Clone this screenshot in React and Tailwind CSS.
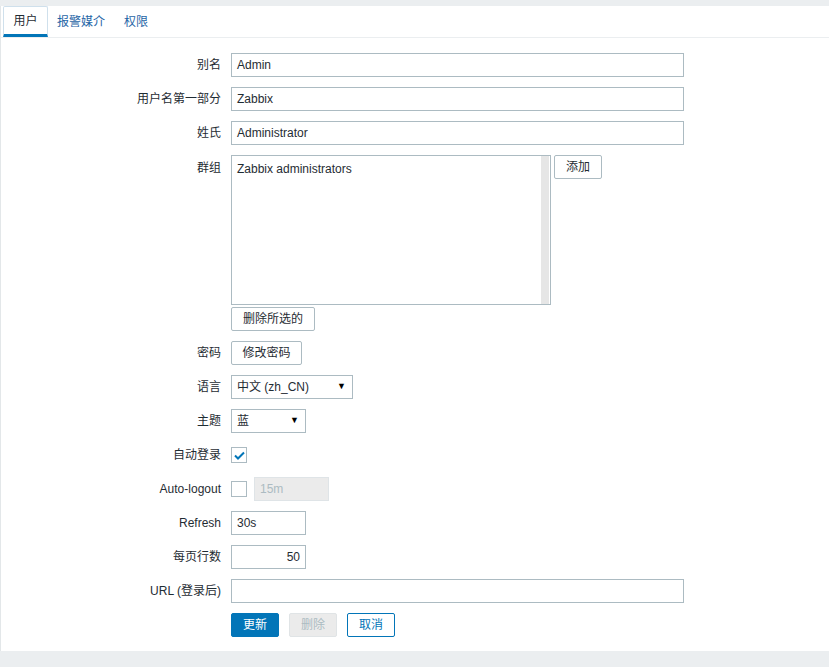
const font = { fontFamily: '"Liberation Sans", Arial, "Noto Sans CJK SC", sans-serif' };

const Label = ({ children }) => (
  <div className="h-6 flex items-center justify-end text-[12px] text-[#1f2c33]">
    {children}
  </div>
);

const TextInput = ({ value, className = "", right = false }) => (
  <div
    className={`h-6 border border-[#acbbc2] bg-white flex items-center px-[5px] text-[12px] text-[#1f2c33] ${
      right ? "justify-end" : ""
    } ${className}`}
  >
    {value}
  </div>
);

const Btn = ({ children, className = "" }) => (
  <button
    className={`h-6 px-[10px] border border-[#acbbc2] bg-white text-[12px] text-[#1f2c33] rounded-[2px] flex items-center ${className}`}
  >
    {children}
  </button>
);

const Select = ({ value, className = "" }) => (
  <div
    className={`h-6 border border-[#acbbc2] bg-white flex items-center justify-between pl-[5px] pr-[6px] text-[12px] text-[#1f2c33] ${className}`}
  >
    <span>{value}</span>
    <span className="text-[9px] text-black">▼</span>
  </div>
);

const Check = ({ checked }) => (
  <div className="w-4 h-4 border border-[#acbbc2] bg-white flex items-center justify-center">
    {checked && (
      <svg width="11" height="9" viewBox="0 0 11 9">
        <path d="M1 4.5 L4 7.5 L10 1.5" fill="none" stroke="#0275b8" strokeWidth="2" />
      </svg>
    )}
  </div>
);

export default function App() {
  return (
    <div className="w-[829px] h-[667px] bg-[#ebeef0] pt-[6px]" style={font}>
      <div className="bg-white h-[645px] border-l border-[#e3e7e9]">
        {/* tabs */}
        <div className="h-[32px] flex items-end border-b border-[#ebeef0] pl-[2px]">
          <div className="h-[31px] w-[45px] border border-[#cfe0ec] border-b-[3px] border-b-[#0275b8] flex items-center justify-center text-[12px] text-[#1f2c33] rounded-t-[2px]">
            用户
          </div>
          <div className="h-[31px] px-[9px] flex items-center text-[12px] text-[#1f65a6]">
            报警媒介
          </div>
          <div className="h-[31px] px-[10px] flex items-center text-[12px] text-[#1f65a6]">
            权限
          </div>
        </div>

        {/* form */}
        <div className="grid grid-cols-[220px_1fr] gap-x-[10px] gap-y-[10px] pt-[15px]">
          <Label>别名</Label>
          <TextInput value="Admin" className="w-[453px]" />

          <Label>用户名第一部分</Label>
          <TextInput value="Zabbix" className="w-[453px]" />

          <Label>姓氏</Label>
          <TextInput value="Administrator" className="w-[453px]" />

          <div className="h-6 flex items-start justify-end pt-[4px] text-[12px] text-[#1f2c33]">群组</div>
          <div className="flex flex-col gap-[2px]">
            <div className="flex gap-[3px]">
              <div className="w-[320px] h-[150px] border border-[#acbbc2] bg-white flex">
                <div className="flex-1 px-[5px] pt-[4px] text-[12px] text-[#1f2c33]">Zabbix administrators</div>
                <div className="w-[8px] bg-[#e6e6e6] mr-[1px]" />
              </div>
              <Btn className="w-[48px] justify-center px-0">添加</Btn>
            </div>
            <Btn className="w-[84px] justify-center px-0">删除所选的</Btn>
          </div>

          <Label>密码</Label>
          <div>
            <Btn className="w-[71px] justify-center px-0">修改密码</Btn>
          </div>

          <Label>语言</Label>
          <Select value="中文 (zh_CN)" className="w-[122px]" />

          <Label>主题</Label>
          <Select value="蓝" className="w-[75px]" />

          <Label>自动登录</Label>
          <div className="h-6 flex items-center">
            <Check checked />
          </div>

          <Label>Auto-logout</Label>
          <div className="h-6 flex items-center gap-[7px]">
            <Check />
            <div className="h-6 w-[75px] border border-[#dfe4e7] bg-[#ebebeb] flex items-center px-[5px] text-[12px] text-[#acbbc2]">
              15m
            </div>
          </div>

          <Label>Refresh</Label>
          <TextInput value="30s" className="w-[75px]" />

          <Label>每页行数</Label>
          <TextInput value="50" className="w-[75px]" right />

          <Label>URL (登录后)</Label>
          <TextInput value="" className="w-[453px]" />

          <div />
          <div className="flex gap-[10px]">
            <button className="h-6 w-[48px] bg-[#0275b8] border border-[#0275b8] text-white text-[12px] rounded-[2px]">
              更新
            </button>
            <button className="h-6 w-[48px] bg-[#ebebeb] border border-[#e0e4e6] text-[#acbbc2] text-[12px] rounded-[2px]">
              删除
            </button>
            <button className="h-6 w-[48px] bg-white border border-[#0275b8] text-[#0275b8] text-[12px] rounded-[2px]">
              取消
            </button>
          </div>
        </div>
      </div>
    </div>
  );
}
